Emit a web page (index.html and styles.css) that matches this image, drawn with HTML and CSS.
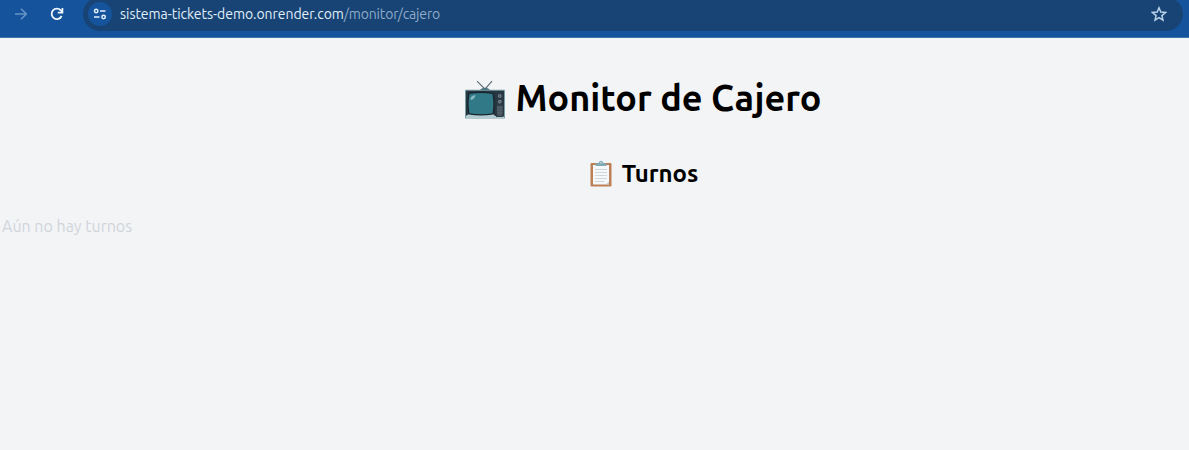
FILE: index.html
```html
<!DOCTYPE html>
<html lang="es">
<head>
<meta charset="utf-8">
<title>Monitor de Cajero</title>
<link rel="stylesheet" href="styles.css">
</head>
<body>
<header class="toolbar">
  <svg class="nav-icon forward" viewBox="0 0 14 14"><path d="M1 7h11M7 1.700 12.300 7 7 12.300"/></svg>
  <svg class="nav-icon reload" viewBox="0 0 14 14"><path d="M11.600 9A5.200 5.200 0 1 1 10.800 3.400L12.300 5"/><path d="M12.400 1v4.600H7.800"/></svg>
  <div class="address">
    <span class="site-info">
      <svg viewBox="0 0 14 12"><circle cx="3.200" cy="3" r="1.700"/><path d="M7 3h5.500M1 9h5.500"/><circle cx="10.600" cy="9" r="1.700"/></svg>
    </span>
    <span class="url"><span class="host">sistema-tickets-demo.onrender.com</span><span class="path">/monitor/cajero</span></span>
    <svg class="star" viewBox="0 0 16 16"><path d="m8 1.800 1.800 4.300 4.700.4-3.600 3.100 1.100 4.600L8 11.700l-4 2.500 1.100-4.600-3.600-3.100 4.700-.4z"/></svg>
  </div>
</header>
<main class="page">
  <h1 class="title">
    <svg class="tv" viewBox="0 0 40 38" preserveAspectRatio="none">
      <path d="M12 1l8 8 7-8" fill="none" stroke="#596974" stroke-width="1.100"/>
      <path d="M15 10q1-2.500 5-2.500t5 2.500z" fill="#49727d"/>
      <rect y="9.500" width="40" height="28" rx=".7" fill="#789da5"/>
      <rect x="1" y="10.500" width="38" height="24.500" fill="#263641"/>
      <path d="M1 35l3-2h24l2 2 9 0v2H1z" fill="#b1cbd1"/>
      <path d="M4 13q12-2 24 0 2 11 0 20-12 2-24 0-2-10 0-20z" fill="#317987" stroke="#17242d" stroke-width="1.200"/>
      <path d="M5.500 18q.5-3 5-3.500-.5 4-5 5z" fill="#86b9bf"/>
      <rect x="31" y="11.500" width="7.500" height="24.500" fill="#293843"/>
      <circle cx="34.800" cy="15.500" r="1.800" fill="#839199"/><circle cx="34.800" cy="21" r="1.800" fill="#839199"/>
      <path d="M34.800 14v3M33.500 20l2.500 2" stroke="#263641" stroke-width=".8"/>
      <rect x="32" y="25" width="5.500" height="10" fill="#46545e"/>
      <path d="M32 27h5.500M32 29.500h5.500M32 32h5.500" stroke="#5b6972" stroke-width=".8"/>
    </svg>
    <span>Monitor de Cajero</span>
  </h1>
  <h2 class="subtitle">
    <svg class="clipboard" viewBox="0 0 22 27">
      <rect x=".5" y="3" width="21" height="23.500" rx="1.200" fill="#bd7f56"/>
      <path d="M3 5h16v19.500H3z" fill="#f5f7f8"/>
      <path d="M16 24.500l3-3v3z" fill="#c5d0d4"/>
      <path d="M5 9.500h12M5 12.500h12M5 15.500h12M5 18.500h12M5 21.500h9" stroke="#c5ced3" stroke-width=".8"/>
      <path d="M5.500 6V4.200q0-1 1.500-1h1.500Q9 .7 11 .7t2.500 2.500H15q1.500 0 1.500 1V6z" fill="#7eabb5"/>
      <circle cx="11" cy="2.700" r=".8" fill="#e1ebed"/>
    </svg>
    <span>Turnos</span>
  </h2>
  <p class="empty">Aún no hay turnos</p>
</main>
</body>
</html>
```
FILE: styles.css
```css
* { box-sizing: border-box; }
body {
  margin: 0;
  height: 450px;
  overflow: hidden;
  background: #f3f4f6;
  font-family: Ubuntu, "Noto Sans", sans-serif;
}
.toolbar {
  display: flex;
  height: 38px;
  padding: 0 6px 7px 14px;
  align-items: center;
  background: #15539c;
  border-bottom: 1px solid #3f74b0;
}
svg { display: block; flex: none; }
.nav-icon { width: 14px; height: 14px; margin-top: -2px; fill: none; stroke-width: 1.6; }
.forward { stroke: #6795c6; }
.reload { margin-left: 22px; stroke: #f0f7fc; stroke-width: 1.8; }
.address {
  display: flex;
  flex: 1;
  align-items: center;
  height: 34px;
  margin: -2px 0 0 19px;
  padding: 0 16px 0 5px;
  border-radius: 17px;
  background: #184475;
}
.site-info {
  display: grid;
  place-items: center;
  width: 24px;
  height: 24px;
  border-radius: 50%;
  background: #15539c;
}
.site-info svg { width: 14px; height: 12px; fill: none; stroke: #e2f1fb; stroke-width: 1.5; }
.url { flex: 1; padding-left: 8px; font-size: 14px; line-height: 20px; white-space: nowrap; }
.host { color: #e1effa; letter-spacing: -0.04px; }
.path { color: #8eabc9; letter-spacing: -0.16px; }
.star { width: 16px; height: 16px; fill: none; stroke: #b9d2e9; stroke-width: 1.5; }
.title, .subtitle {
  display: flex;
  justify-content: center;
  margin: 0;
  padding: 36px 0 0 97px;
  color: #000;
  font-weight: 600;
  white-space: nowrap;
}
.title { gap: 11px; font-size: 36px; line-height: 48px; }
.tv { width: 40px; height: 39px; margin-top: 6px; }
.subtitle { padding-left: 99px; gap: 10px; font-size: 24px; line-height: 32px; }
.clipboard { width: 22px; height: 27px; margin-top: 2px; }
.empty { margin: 24px 0 0 2px; color: #d1d5db; font-size: 16px; line-height: 24px; }
```
